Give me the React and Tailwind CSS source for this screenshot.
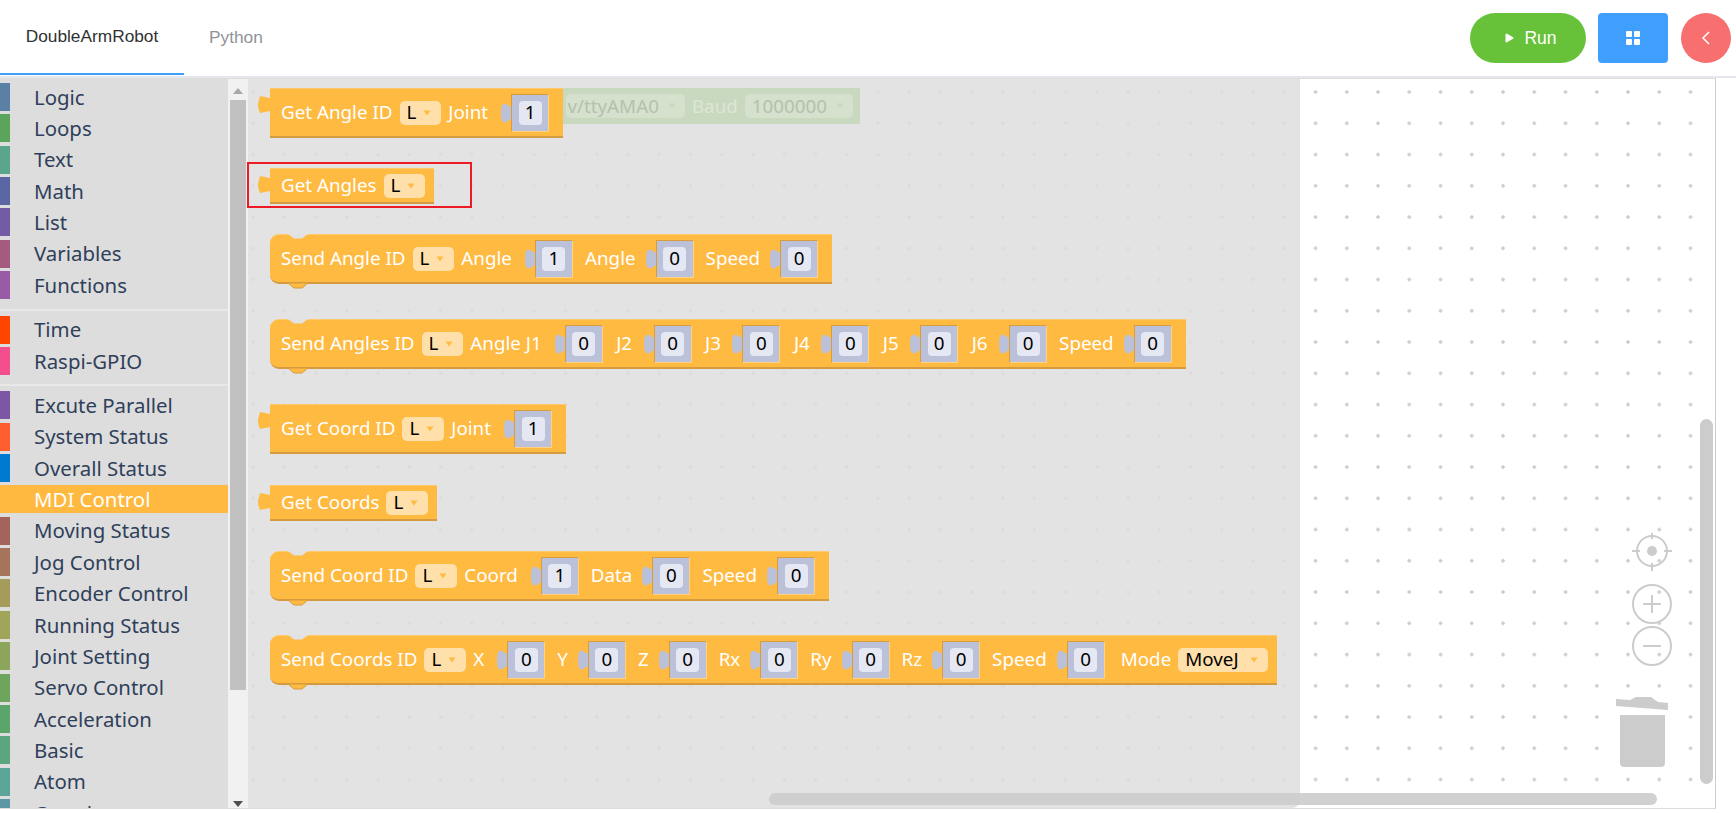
import { Play } from "lucide-react";

const categories = [
  [
    ["Logic", "bg-[#5b80a5]"],
    ["Loops", "bg-[#5ba55b]"],
    ["Text", "bg-[#5ba58c]"],
    ["Math", "bg-[#5b67a5]"],
    ["List", "bg-[#745ba5]"],
    ["Variables", "bg-[#a55b80]"],
    ["Functions", "bg-[#995ba5]"],
  ],
  [
    ["Time", "bg-[#ff4500]"],
    ["Raspi-GPIO", "bg-[#f54e8e]"],
  ],
  [
    ["Excute Parallel", "bg-[#7d57a5]"],
    ["System Status", "bg-[#ff5f2e]"],
    ["Overall Status", "bg-[#0079d0]"],
    ["MDI Control", "bg-[#ffb940]", true],
    ["Moving Status", "bg-[#a5645b]"],
    ["Jog Control", "bg-[#a5745b]"],
    ["Encoder Control", "bg-[#a59c5b]"],
    ["Running Status", "bg-[#a0a55b]"],
    ["Joint Setting", "bg-[#8ca55b]"],
    ["Servo Control", "bg-[#6ca55b]"],
    ["Acceleration", "bg-[#5ba56a]"],
    ["Basic", "bg-[#5ba57f]"],
    ["Atom", "bg-[#5ba598]"],
    ["Coords", "bg-[#5b97a5]"],
  ],
];

const blocks = [
  {
    kind: "value",
    cls: "mt-0",
    items: ["Get Angle ID", "#L", "Joint", 1],
  },
  { kind: "value", cls: "mt-[30px]", items: ["Get Angles", "#L"] },
  {
    kind: "statement",
    cls: "mt-[30px]",
    items: ["Send Angle ID", "#L", "Angle", 1, "Angle", 0, "Speed", 0],
  },
  {
    kind: "statement",
    cls: "mt-[35px]",
    items: [
      "Send Angles ID",
      "#L",
      "Angle J1",
      0,
      "J2",
      0,
      "J3",
      0,
      "J4",
      0,
      "J5",
      0,
      "J6",
      0,
      "Speed",
      0,
    ],
  },
  {
    kind: "value",
    cls: "mt-[35px]",
    items: ["Get Coord ID", "#L", "Joint", 1],
  },
  { kind: "value", cls: "mt-[31px]", items: ["Get Coords", "#L"] },
  {
    kind: "statement",
    cls: "mt-[30px]",
    items: ["Send Coord ID", "#L", "Coord", 1, "Data", 0, "Speed", 0],
  },
  {
    kind: "statement",
    cls: "mt-[34px]",
    items: [
      "Send Coords ID",
      "#L",
      "X",
      0,
      "Y",
      0,
      "Z",
      0,
      "Rx",
      0,
      "Ry",
      0,
      "Rz",
      0,
      "Speed",
      0,
      "Mode",
      "#MoveJ",
    ],
  },
];

function labelClass(text) {
  if (/^J\d$/.test(text)) return "px-[1.5px]";
  if (text === "Mode") return "pl-[4px]";
  return "";
}

function Dropdown({ label }) {
  return (
    <div className="flex h-[24px] items-center rounded-[5px] bg-[#ffe0aa] pl-[7px] pr-[10px] text-black">
      <span>{label}</span>
      <svg
        width="8"
        height="6"
        viewBox="0 0 8 6"
        className={label.length > 1 ? "ml-[11px]" : "ml-[7px]"}
      >
        <path d="M0.5 0.5H7.5L4 5.5Z" fill="#ffba42" />
      </svg>
    </div>
  );
}

function Socket({ value, first }) {
  return (
    <div className={`mr-[5px] flex items-center ${first ? "ml-[6px]" : "ml-[3px]"}`}>
      <svg width="10" height="20" viewBox="0 0 10 18" preserveAspectRatio="none" className="shrink-0">
        <path
          d="M10 3L8 3C6 0 2 0 1 2C-0.3 5 -0.3 13 1 16C2 18 6 18 8 15L10 15Z"
          fill="#bcc1da"
        />
      </svg>
      <div className="flex h-[38px] w-[38px] items-center justify-center border border-t-[#d99c3c] border-l-[#d99c3c] border-r-[#ffd283] border-b-[#ffd283] bg-[#bcc1da]">
        <div className="flex h-[24px] w-[23px] items-center justify-center rounded-[4px] bg-[#e5e8f3] text-black">
          {value}
        </div>
      </div>
    </div>
  );
}

function Block({ kind, cls, items }) {
  const statement = kind === "statement";
  const firstSocket = items.findIndex((i) => typeof i === "number");
  return (
    <div
      className={`relative flex w-fit items-center gap-[7px] border-t border-t-[#ffca6b] border-b-2 border-b-[#d69b3e] bg-[#ffba42] pl-[11px] pr-[9px] text-white ${cls} ${
        firstSocket >= 0 ? "h-[50px]" : "h-[36px]"
      } ${statement ? "rounded-l-[9px]" : ""}`}
    >
      {!statement && (
        <svg
          width="12"
          height="18"
          viewBox="0 0 12 18"
          className="absolute left-[-12px] top-[7px]"
        >
          <path
            d="M12 2L2 0C1 4 0 6 0 9C0 12 1 14 2 17L12 15Z"
            fill="#ffba42"
          />
        </svg>
      )}
      {statement && (
        <>
          <svg
            width="20"
            height="5"
            viewBox="0 0 20 5"
            className="absolute left-[18px] top-[-1px]"
          >
            <path d="M0 0H20L14 4.5H6Z" fill="#e2e2e2" />
          </svg>
          <svg
            width="20"
            height="6"
            viewBox="0 0 20 6"
            className="absolute left-[18px] bottom-[-7px]"
          >
            <path d="M0 0H20L14 5H6Z" fill="#ffba42" stroke="#d69b3e" />
          </svg>
        </>
      )}
      {items.map((item, i) => {
        if (typeof item === "number") {
          return <Socket key={i} value={item} first={i === firstSocket} />;
        }
        if (item[0] === "#") return <Dropdown key={i} label={item.slice(1)} />;
        return (
          <span key={i} className={labelClass(item)}>
            {item}
          </span>
        );
      })}
    </div>
  );
}

function Sidebar() {
  return (
    <div className="flex w-[248px] shrink-0 overflow-hidden bg-[#f1f1f1]">
      <div className="w-[228px] shrink-0 overflow-hidden bg-[#ddd] pt-[4px] font-['Noto_Sans',sans-serif] text-[20.4px] text-[#2f405a]">
        {categories.map((group, g) => (
          <div
            key={g}
            className={g > 0 ? "mt-[9.5px] border-t-2 border-t-[#e8e8e8] pt-[5px]" : ""}
          >
            {group.map(([name, color, active]) => (
              <div
                key={name}
                className={`mb-[3.35px] flex h-[28px] items-center ${
                  active ? "bg-[#ffb940] text-white" : ""
                }`}
              >
                <span className={`h-full w-[10px] ${color}`} />
                <span className="ml-[24px]">{name}</span>
              </div>
            ))}
          </div>
        ))}
      </div>
      <div className="relative flex-1">
        <svg width="10" height="6" viewBox="0 0 10 6" className="absolute left-[5px] top-[9px]">
          <path d="M0 6L5 0L10 6Z" fill="#a8a8a8" />
        </svg>
        <div className="absolute left-[2px] right-[2px] top-[21px] h-[590px] bg-[#c1c1c1]" />
        <svg width="10" height="6" viewBox="0 0 10 6" className="absolute bottom-[1px] left-[5px]">
          <path d="M0 0H10L5 6Z" fill="#505050" />
        </svg>
      </div>
    </div>
  );
}

function GreenBlock() {
  return (
    <div className="absolute left-[250px] top-[9px] flex h-[36px] w-[362px] items-center justify-end gap-[7px] bg-[#c9d9bf] pr-[7px] text-[#b4c0ae]">
      <div className="flex h-[24px] items-center gap-[9px] rounded-[5px] bg-[#d5e0cd] pl-[1px] pr-[9px]">
        <span>v/ttyAMA0</span>
        <svg width="8" height="6" viewBox="0 0 8 6">
          <path d="M0.5 0.5H7.5L4 5.5Z" fill="#c9d9bf" />
        </svg>
      </div>
      <span className="text-[#dde6d6]">Baud</span>
      <div className="flex h-[24px] items-center gap-[9px] rounded-[5px] bg-[#d5e0cd] pl-[7px] pr-[9px]">
        <span>1000000</span>
        <svg width="8" height="6" viewBox="0 0 8 6">
          <path d="M0.5 0.5H7.5L4 5.5Z" fill="#c9d9bf" />
        </svg>
      </div>
    </div>
  );
}

function Flyout() {
  return (
    <div className="absolute bottom-0 left-0 top-0 w-[1052px] rounded-br-[8px] bg-[#dedede]/85 pl-[22px] pt-[9px] font-['Noto_Sans',sans-serif] text-[18.8px]">
      <GreenBlock />
      {blocks.map((b, i) => (
        <Block key={i} {...b} />
      ))}
      <div className="absolute left-[-1px] top-[83px] h-[46px] w-[225px] border-2 border-[#ed1c24]" />
    </div>
  );
}

function Controls() {
  return (
    <>
      <svg
        width="60"
        height="190"
        viewBox="0 0 60 190"
        className="absolute left-[1374px] top-[454px]"
        fill="none"
        stroke="#ccc"
        strokeWidth="2"
      >
        <circle cx="30" cy="18" r="15" />
        <circle cx="30" cy="18" r="5" fill="#ccc" stroke="none" />
        <path d="M30 -2V6M30 30V38M10 18H18M42 18H50" />
        <circle cx="30" cy="71" r="19" />
        <path d="M21 71H39M30 62V80" />
        <circle cx="30" cy="113" r="19" />
        <path d="M21 113H39" />
      </svg>
      <svg
        width="56"
        height="72"
        viewBox="0 0 56 72"
        className="absolute left-[1366px] top-[618px]"
      >
        <path
          d="M2 2L16 3L22 0H37L44 5L54 6V13L2 9Z"
          fill="#ccc"
        />
        <path
          d="M6 18H51V66Q51 70 47 70H10Q6 70 6 66Z"
          fill="#ccc"
        />
      </svg>
    </>
  );
}

export default function App() {
  return (
    <div className="flex h-screen flex-col overflow-hidden bg-white font-['Liberation_Sans',sans-serif]">
      <header className="flex h-[78px] shrink-0 items-start justify-between border-b-2 border-b-[#e4e7ed]">
        <div className="flex text-[17.3px]">
          <div className="flex h-[75px] w-[184px] items-center justify-center border-b-2 border-b-[#409eff] text-[#303133]">
            DoubleArmRobot
          </div>
          <div className="flex h-[75px] items-center pl-[25px] text-[#909399]">
            Python
          </div>
        </div>
        <div className="flex items-center pr-[5px] pt-[13px]">
          <button className="flex h-[50px] w-[116px] items-center justify-center gap-[9px] rounded-full bg-[#67c23a] pl-[4px] text-[17.5px] text-white">
            <Play size={12} fill="white" strokeWidth={0} />
            Run
          </button>
          <button className="ml-[12px] flex h-[50px] w-[70px] items-center justify-center rounded-[4px] bg-[#409eff]">
            <div className="grid grid-cols-2 gap-[2px]">
              <span className="h-[6px] w-[6px] rounded-[1px] bg-white" />
              <span className="h-[6px] w-[6px] rounded-[1px] bg-white" />
              <span className="h-[6px] w-[6px] rounded-[1px] bg-white" />
              <span className="h-[6px] w-[6px] rounded-[1px] bg-white" />
            </div>
          </button>
          <button className="ml-[13px] flex h-[50px] w-[50px] items-center justify-center rounded-full bg-[#f76f6f]">
            <svg width="10" height="16" viewBox="0 0 10 16" fill="none" stroke="white" strokeWidth="1.5">
              <path d="M8 2L2 8L8 14" />
            </svg>
          </button>
        </div>
      </header>
      <main className="mb-[4px] flex w-[1716px] flex-1 overflow-hidden border-y border-r border-y-[#ddd] border-r-[#ccc]">
        <Sidebar />
        <div className="relative flex-1 bg-[radial-gradient(circle,#ccc_1.5px,transparent_1.7px)] bg-[length:31.25px_31.25px] bg-[position:-10.6px_-2.6px]">
          <Flyout />
          <Controls />
          <div className="absolute bottom-[24px] right-[2px] top-[340px] w-[13px] rounded-full bg-[#ccc]" />
          <div className="absolute bottom-[3px] left-[521px] h-[12px] w-[888px] rounded-full bg-[#ccc]/90" />
        </div>
      </main>
    </div>
  );
}
